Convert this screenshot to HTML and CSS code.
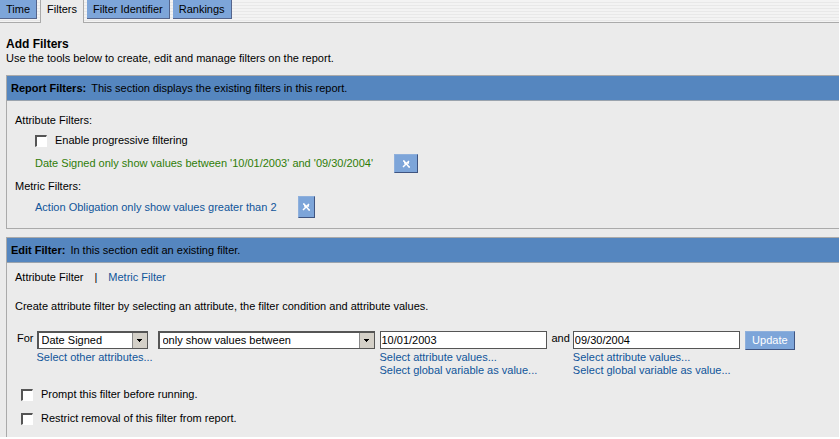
FILE: index.html
```html
<!DOCTYPE html>
<html lang="en">
<head>
    <meta charset="UTF-8">
    <meta name="viewport" content="width=device-width, initial-scale=1.0">
    <title>Add Filters</title>
    <link rel="stylesheet" href="styles.css">
</head>
<body>
    <div class="page">
        <nav class="tabs">
            <a class="tab" href="#">Time</a>
            <a class="tab active" href="#">Filters</a>
            <a class="tab" href="#">Filter Identifier</a>
            <a class="tab" href="#">Rankings</a>
        </nav>

        <main class="content">
            <header class="intro">
                <h1>Add Filters</h1>
                <p>Use the tools below to create, edit and manage filters on the report.</p>
            </header>

            <section class="panel">
                <div class="panel-title">
                    <h2>Report Filters:</h2>
                    <span>This section displays the existing filters in this report.</span>
                </div>
                <div class="panel-body report-filters">
                    <h3>Attribute Filters:</h3>
                    <div class="check indent">
                        <input type="checkbox" id="progressive">
                        <label for="progressive">Enable progressive filtering</label>
                    </div>
                    <div class="filter-row indent">
                        <a class="current" href="#">Date Signed only show values between '10/01/2003' and '09/30/2004'</a>
                        <button class="remove wide" type="button" aria-label="Remove attribute filter">
                            <svg width="9" height="8" viewBox="0 0 9 8"><path d="M1 1h1l5 6h1M7 1L1 7M2 3h2M5 3h2" /></svg>
                        </button>
                    </div>
                    <h3>Metric Filters:</h3>
                    <div class="filter-row indent">
                        <a href="#">Action Obligation only show values greater than 2</a>
                        <button class="remove tall" type="button" aria-label="Remove metric filter">
                            <svg width="9" height="8" viewBox="0 0 9 8"><path d="M1 1h1l5 6h1M7 1L1 7M2 3h2M5 3h2" /></svg>
                        </button>
                    </div>
                </div>
            </section>

            <section class="panel edit-panel">
                <div class="panel-title">
                    <h2>Edit Filter:</h2>
                    <span>In this section edit an existing filter.</span>
                </div>
                <form class="panel-body edit-filter">
                    <div class="modes">
                        <span>Attribute Filter</span>
                        <span>|</span>
                        <a href="#">Metric Filter</a>
                    </div>
                    <p>Create attribute filter by selecting an attribute, the filter condition and attribute values.</p>
                    <div class="condition">
                        <label class="word" for="attribute">For</label>
                        <div class="field attribute">
                            <select id="attribute">
                                <option>Date Signed</option>
                            </select>
                            <a href="#">Select other attributes...</a>
                        </div>
                        <div class="field operator">
                            <select aria-label="Condition">
                                <option>only show values between</option>
                            </select>
                        </div>
                        <div class="field value">
                            <input type="text" aria-label="From" value="10/01/2003">
                            <a href="#">Select attribute values...</a>
                            <a href="#">Select global variable as value...</a>
                        </div>
                        <label class="word" for="to">and</label>
                        <div class="field value">
                            <input type="text" id="to" value="09/30/2004">
                            <a href="#">Select attribute values...</a>
                            <a href="#">Select global variable as value...</a>
                        </div>
                        <button class="update" type="button">Update</button>
                    </div>
                    <div class="check">
                        <input type="checkbox" id="prompt">
                        <label for="prompt">Prompt this filter before running.</label>
                    </div>
                    <div class="check">
                        <input type="checkbox" id="restrict">
                        <label for="restrict">Restrict removal of this filter from report.</label>
                    </div>
                </form>
            </section>
        </main>
    </div>
</body>
</html>
```
FILE: styles.css
```css
* {
    box-sizing: border-box;
}
body {
    margin: 0;
    background: #fff;
    color: #000;
    font-family: "Liberation Sans", Arial, sans-serif;
    font-size: 11px;
    line-height: 13px;
}
h1, h2, h3, p {
    margin: 0;
    font-size: 11px;
    font-weight: normal;
}
h1, h2 {
    font-weight: bold;
}
a {
    color: #10559a;
    text-decoration: none;
}
button, input, select {
    font: inherit;
    color: inherit;
    margin: 0;
}
.page {
    margin-right: 1px;
    background: #ebebeb;
}

/* tabs */
.tabs {
    display: flex;
    align-items: flex-start;
    gap: 3px;
    height: 23px;
    border-bottom: 1px solid #aaa;
    background: repeating-linear-gradient(#f3f3f3 0 2px, #e8e8e8 2px 3px);
}
.tab {
    height: 19px;
    padding: 3px 6px 0;
    border-right: 1px solid #55658c;
    border-bottom: 1px solid #55658c;
    background: #7da5d9;
    color: #000;
}
.tab.active {
    height: 23px;
    border: solid #aaa;
    border-width: 0 1px;
    background: #ebebeb;
}

/* panels */
.content {
    padding: 14px 0 0 6px;
}
.intro {
    margin-bottom: 10px;
}
.intro h1 {
    font-size: 12px;
    line-height: 15px;
}
.panel {
    border: 1px solid #aaa;
    border-right: none;
}
.edit-panel {
    margin-top: 8px;
    border-bottom: none;
}
.panel-title {
    display: flex;
    align-items: center;
    gap: 5px;
    height: 25px;
    padding-left: 4px;
    border-bottom: 1px solid #9aa3ad;
    background: #5586bf;
}
.panel-body {
    padding-left: 8px;
}
.report-filters {
    padding-top: 13px;
    padding-bottom: 10px;
}
.indent {
    margin-left: 20px;
}
.check {
    display: flex;
    align-items: center;
    gap: 8px;
}
.check input {
    appearance: none;
    width: 12px;
    height: 12px;
    border: 1px solid #fff;
    border-top: 2px solid #555;
    border-left: 2px solid #555;
    background: #fff;
}
.check input:checked {
    background: #15548f;
}
.report-filters .check {
    margin-top: 7px;
    margin-bottom: 7px;
}
.filter-row {
    display: flex;
    align-items: center;
    gap: 21px;
}
.filter-row .current {
    color: #2f7d08;
}
.remove, .update {
    display: flex;
    align-items: center;
    justify-content: center;
    height: 19px;
    padding: 0;
    border: 1px solid #8fb0dc;
    border-right-color: #3f5480;
    border-bottom-color: #3f5480;
    background: #7da5d9;
    color: #fff;
}
.remove.wide {
    width: 24px;
}
.remove.tall {
    width: 17px;
    height: 22px;
}
.remove svg {
    fill: none;
    stroke: #fff;
    stroke-width: 1.5;
}
.report-filters .filter-row + h3 {
    margin-top: 7px;
    margin-bottom: 3px;
}

/* filter editor */
.edit-filter {
    padding-top: 8px;
    padding-bottom: 1px;
}
.modes {
    display: flex;
    gap: 11px;
    margin-bottom: 16px;
}
.condition {
    display: flex;
    align-items: flex-start;
    margin-top: 18px;
    margin-bottom: 11px;
    padding-left: 2px;
}
.word {
    padding-top: 1px;
    margin-right: 3px;
}
.field {
    display: flex;
    flex-direction: column;
}
.field select, .field input {
    width: 100%;
    height: 18px;
    margin-bottom: 2px;
    border: 1px solid #555;
    border-radius: 0;
    background: #fff;
    padding: 0 3px;
}
.field input {
    padding: 0 1px;
}
.field select {
    appearance: none;
    border-top-width: 2px;
    border-left-width: 2px;
    /* arrow, then the grey button behind it */
    background:
        linear-gradient(#000, #000) right 5px top 6px / 5px 1px no-repeat,
        linear-gradient(#000, #000) right 6px top 7px / 3px 1px no-repeat,
        linear-gradient(#000, #000) right 7px top 8px / 1px 1px no-repeat,
        linear-gradient(90deg, #888 1px, #d4d0c8 1px) right / 15px 100% no-repeat,
        #fff;
}
.attribute {
    width: 111px;
    margin-right: 10px;
}
.attribute a {
    white-space: nowrap;
}
.operator {
    width: 217px;
    margin-right: 5px;
}
.value {
    width: 167px;
    margin-right: 5px;
}
.update {
    width: 50px;
}
.edit-filter .check {
    padding-left: 6px;
    margin-bottom: 11px;
}
```
